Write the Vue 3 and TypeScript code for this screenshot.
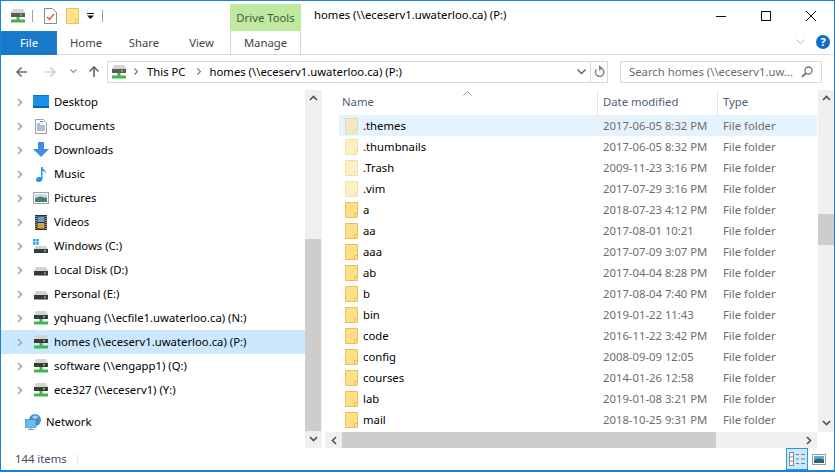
<script setup lang="ts">
type Kind = 'desktop' | 'docs' | 'down' | 'music' | 'pics' | 'videos' | 'win' | 'disk' | 'net'
interface NavItem { label: string; kind: Kind; selected?: boolean }
const navItems: NavItem[] = [
  { label: 'Desktop', kind: 'desktop' },
  { label: 'Documents', kind: 'docs' },
  { label: 'Downloads', kind: 'down' },
  { label: 'Music', kind: 'music' },
  { label: 'Pictures', kind: 'pics' },
  { label: 'Videos', kind: 'videos' },
  { label: 'Windows (C:)', kind: 'win' },
  { label: 'Local Disk (D:)', kind: 'disk' },
  { label: 'Personal (E:)', kind: 'disk' },
  { label: 'yqhuang (\\\\ecfile1.uwaterloo.ca) (N:)', kind: 'net' },
  { label: 'homes (\\\\eceserv1.uwaterloo.ca) (P:)', kind: 'net', selected: true },
  { label: 'software (\\\\engapp1) (Q:)', kind: 'net' },
  { label: 'ece327 (\\\\eceserv1) (Y:)', kind: 'net' },
]
interface FileRow { name: string; date: string; hidden?: boolean; hover?: boolean }
const files: FileRow[] = [
  { name: '.themes', date: '2017-06-05 8:32 PM', hidden: true, hover: true },
  { name: '.thumbnails', date: '2017-06-05 8:32 PM', hidden: true },
  { name: '.Trash', date: '2009-11-23 3:16 PM', hidden: true },
  { name: '.vim', date: '2017-07-29 3:16 PM', hidden: true },
  { name: 'a', date: '2018-07-23 4:12 PM' },
  { name: 'aa', date: '2017-08-01 10:21' },
  { name: 'aaa', date: '2017-07-09 3:07 PM' },
  { name: 'ab', date: '2017-04-04 8:28 PM' },
  { name: 'b', date: '2017-08-04 7:40 PM' },
  { name: 'bin', date: '2019-01-22 11:43' },
  { name: 'code', date: '2016-11-22 3:42 PM' },
  { name: 'config', date: '2008-09-09 12:05' },
  { name: 'courses', date: '2014-01-26 12:58' },
  { name: 'lab', date: '2019-01-08 3:21 PM' },
  { name: 'mail', date: '2018-10-25 9:31 PM' },
]
</script>

<template>
  <div class="window">
    <header class="titlebar">
      <div class="qat">
        <svg class="ico16" viewBox="0 0 16 16"><path d="M3 1h10l2 4v1H1V5z" fill="#d4d4d4"/><rect x="1" y="5" width="14" height="4" fill="#5a5a5a"/><rect x="10" y="6" width="2" height="1.500" fill="#5fe05f"/><rect x="6.500" y="9" width="3" height="3" fill="#3fb54a"/><rect x="1" y="11.500" width="14" height="3" fill="#3fb54a"/></svg>
        <span class="qsep"></span>
        <svg class="ico-note" viewBox="0 0 13 16"><path d="M.5.500h8l4 4v11H.5z" fill="#fff" stroke="#8a8a8a"/><path d="M3 9l2.500 2.500L10 6" fill="none" stroke="#e4572e" stroke-width="1.400"/></svg>
        <svg class="ico-newfolder" viewBox="0 0 13 16"><path d="M.5.500h12v15H.5z" fill="#ffe58f" stroke="#e6c35c"/><path d="M9.500 15.500v-4h3" fill="none" stroke="#e6c35c"/></svg>
        <svg class="ico-drop" viewBox="0 0 7 6"><rect width="7" height="1" fill="#111"/><path d="M0 2.500h7L3.500 6z" fill="#111"/></svg>
        <span class="qsep last"></span>
      </div>
      <div class="context-tab">Drive Tools</div>
      <div class="title">homes (\\eceserv1.uwaterloo.ca) (P:)</div>
      <div class="controls">
        <button class="ctl"><svg width="10" height="10" viewBox="0 0 10 10"><path d="M0 5.500h10" stroke="#111"/></svg></button>
        <button class="ctl"><svg width="10" height="10" viewBox="0 0 10 10"><rect x=".5" y=".5" width="9" height="9" fill="none" stroke="#111"/></svg></button>
        <button class="ctl"><svg width="10" height="10" viewBox="0 0 10 10"><path d="M0 0l10 10M10 0L0 10" stroke="#111"/></svg></button>
      </div>
    </header>

    <nav class="ribbon">
      <div class="tab file">File</div>
      <div class="tab home">Home</div>
      <div class="tab share">Share</div>
      <div class="tab view">View</div>
      <div class="tab manage">Manage</div>
      <div class="ribbon-end">
        <svg width="9" height="6" viewBox="0 0 9 6"><path d="M.5.500l4 4 4-4" fill="none" stroke="#b5b5b5"/></svg>
        <span class="help">?</span>
      </div>
    </nav>

    <div class="addressbar">
      <svg class="nav-arrow" viewBox="0 0 13 12"><path d="M12 6H2M6.500 1.500L2 6l4.500 4.500" fill="none" stroke="#6d6d6d" stroke-width="1.700"/></svg>
      <svg class="nav-arrow fwd" viewBox="0 0 13 12"><path d="M1 6h10M6.500 1.500L11 6l-4.500 4.500" fill="none" stroke="#cfcfcf" stroke-width="1.700"/></svg>
      <svg class="recent" viewBox="0 0 7 5"><path d="M.5.500l3 3 3-3" fill="none" stroke="#8d8d8d" stroke-width="1.100"/></svg>
      <svg class="nav-up" viewBox="0 0 12 13"><path d="M6 12V2M1.500 6.500L6 2l4.500 4.500" fill="none" stroke="#6d6d6d" stroke-width="1.700"/></svg>
      <div class="address">
        <svg class="ico16 addr-ico" viewBox="0 0 16 16"><path d="M3 1h10l2 4v1H1V5z" fill="#d4d4d4"/><rect x="1" y="5" width="14" height="4" fill="#5a5a5a"/><rect x="10" y="6" width="2" height="1.500" fill="#5fe05f"/><rect x="6.500" y="9" width="3" height="3" fill="#3fb54a"/><rect x="1" y="11.500" width="14" height="3" fill="#3fb54a"/></svg>
        <svg class="crumb-sep" viewBox="0 0 4 7"><path d="M.5.500l3 3-3 3" fill="none" stroke="#777" stroke-width="1.200"/></svg>
        <span class="crumb">This PC</span>
        <svg class="crumb-sep" viewBox="0 0 4 7"><path d="M.5.500l3 3-3 3" fill="none" stroke="#777" stroke-width="1.200"/></svg>
        <span class="crumb">homes (\\eceserv1.uwaterloo.ca) (P:)</span>
        <span class="addr-grow"></span>
        <svg class="addr-drop" viewBox="0 0 9 6"><path d="M.5.500l4 4 4-4" fill="none" stroke="#666" stroke-width="1.500"/></svg>
        <span class="addr-refresh">
          <svg width="11" height="13" viewBox="0 0 11 13"><path d="M7 3.200a4.200 4.200 0 1 1-4.500 1.200" fill="none" stroke="#808080" stroke-width="1.400"/><path d="M5 0v6l3.500-3z" fill="#808080"/></svg>
        </span>
      </div>
      <div class="search">
        <span class="search-text">Search homes (\\eceserv1.uw...</span>
        <svg width="12" height="12" viewBox="0 0 12 12"><circle cx="7.500" cy="4.500" r="3.500" fill="none" stroke="#777" stroke-width="1.300"/><path d="M5 7l-4 4" stroke="#777" stroke-width="1.800"/></svg>
      </div>
    </div>

    <main class="body">
      <aside class="nav">
        <div class="nav-list">
          <div v-for="item in navItems" :key="item.label" class="nav-row" :class="{ selected: item.selected }">
            <svg class="chev" viewBox="0 0 6 9"><path d="M1 1l3.500 3.500L1 8" fill="none" stroke="#a6a6a6" stroke-width="1.500"/></svg>
            <svg class="nav-ico" viewBox="0 0 16 16">
              <template v-if="item.kind === 'desktop'"><rect y="1" width="16" height="12" fill="#1a8fe8"/><rect y="12" width="16" height="2" fill="#0e5fa8"/><rect y="1" width="16" height=".8" fill="#0f6db5"/></template>
              <template v-else-if="item.kind === 'docs'"><path d="M2.500 1.500h8l3 3v11h-11z" fill="#fafafa" stroke="#a0a0a0"/><path d="M4 6h3M4 8h8M4 10h8M4 12h8" stroke="#5a87b5"/><path d="M7 3.500h3" stroke="#5a87b5"/></template>
              <template v-else-if="item.kind === 'down'"><path d="M5 0h6v7h5l-8 8-8-8h5z" fill="#3f8fdc"/></template>
              <template v-else-if="item.kind === 'music'"><path d="M8 1h1.500c.300 3 4 3 3.500 7-.500-2-2-3-3.500-3v8c0 2-2 3-4 3s-3-1.500-2.500-3 2.500-2.500 5-1.500z" fill="#1f9ae8"/></template>
              <template v-else-if="item.kind === 'pics'"><rect x=".5" y="2.500" width="15" height="11" fill="#fff" stroke="#a0a0a0"/><rect x="2" y="4" width="12" height="4" fill="#c5e0f0"/><path d="M2 8l5-1.500L14 8v4H2z" fill="#4d7d70"/></template>
              <template v-else-if="item.kind === 'videos'"><rect x="2" y="1" width="12" height="15" fill="#333"/><rect x="4.500" y="2.500" width="7" height="5.500" fill="#5aa0d8"/><rect x="4.500" y="9" width="7" height="5.500" fill="#d8a33a"/><path d="M3 2v13M13 2v13" stroke="#ddd" stroke-dasharray="1 1"/></template>
              <template v-else-if="item.kind === 'win'"><rect x="0" y="1" width="2.500" height="2.500" fill="#1ba1ec"/><rect x="3.200" y="1" width="2.500" height="2.500" fill="#1ba1ec"/><rect x="0" y="4.200" width="2.500" height="2.500" fill="#1ba1ec"/><rect x="3.200" y="4.200" width="2.500" height="2.500" fill="#1ba1ec"/><path d="M3 8h10l2 3v3H1v-3z" fill="#d2d2d2"/><rect x="1" y="11" width="14" height="4" fill="#3a3a3a"/><rect x="11" y="12" width="2" height="1.500" fill="#4fdc4f"/></template>
              <template v-else-if="item.kind === 'disk'"><path d="M3 5h10l2 4v2H1V9z" fill="#d2d2d2"/><rect x="1" y="9" width="14" height="4.500" fill="#3a3a3a"/><rect x="11" y="10.500" width="2" height="1.500" fill="#4fdc4f"/></template>
              <template v-else><path d="M3 1h10l2 4v1H1V5z" fill="#d4d4d4"/><rect x="1" y="5" width="14" height="4" fill="#3a3a3a"/><rect x="10" y="6" width="2" height="1.500" fill="#4fdc4f"/><rect x="6.500" y="9" width="3" height="3" fill="#3fb54a"/><rect x="1" y="11.500" width="14" height="3" fill="#3fb54a"/></template>
            </svg>
            <span class="nav-label">{{ item.label }}</span>
          </div>
          <div class="nav-row network">
            <svg class="nav-ico" viewBox="0 0 16 16"><circle cx="10" cy="6" r="6" fill="#4b8fc4"/><path d="M7 3c2-2 5-2 6 0-1 2-4 3-6 0z" fill="#a8d0ea"/><rect x=".5" y="5.500" width="10.500" height="8" fill="#66bff2" stroke="#3a7fb5" stroke-width=".6"/><path d="M3 15.500h6M6 13.500v2" stroke="#8a9aa5"/></svg>
            <span class="nav-label">Network</span>
          </div>
        </div>
        <div class="vscroll nav-scroll">
          <svg class="sb-arrow" viewBox="0 0 9 6"><path d="M1 5l3.500-3.500L8 5" fill="none" stroke="#505050" stroke-width="1.600"/></svg>
          <span class="nav-track"></span>
          <span class="nav-thumb"></span>
          <svg class="sb-arrow" viewBox="0 0 9 6"><path d="M1 1l3.500 3.500L8 1" fill="none" stroke="#505050" stroke-width="1.600"/></svg>
        </div>
        <span class="splitter"></span>
      </aside>

      <section class="list">
        <div class="list-main">
          <div class="list-inner">
            <div class="list-head">
              <div class="col name">Name</div>
              <div class="col date">Date modified</div>
              <div class="col type">Type</div>
              <svg class="sort" viewBox="0 0 9 5"><path d="M.5 4.500l4-4 4 4" fill="none" stroke="#9a9a9a"/></svg>
            </div>
            <div v-for="f in files" :key="f.name" class="row" :class="{ hover: f.hover, hiddenf: f.hidden }">
              <svg class="folder" viewBox="0 0 13 16"><path d="M.5.500h12v15H.5z" fill="#ffe08a" stroke="#e8c254"/><path d="M9.500 15.500v-4h3" fill="none" stroke="#e8c254"/></svg>
              <span class="fname">{{ f.name }}</span>
              <span class="fdate">{{ f.date }}</span>
              <span class="ftype">File folder</span>
            </div>
          </div>
          <div class="vscroll list-scroll">
            <svg class="sb-arrow" viewBox="0 0 9 6"><path d="M1 5l3.500-3.500L8 5" fill="none" stroke="#505050" stroke-width="1.600"/></svg>
            <span class="list-track-a"></span>
            <span class="list-thumb"></span>
            <span class="list-track-b"></span>
            <svg class="sb-arrow" viewBox="0 0 9 6"><path d="M1 1l3.500 3.500L8 1" fill="none" stroke="#505050" stroke-width="1.600"/></svg>
          </div>
        </div>
        <div class="hscroll">
          <svg class="sb-arrow-h" viewBox="0 0 6 9"><path d="M5 1L1.500 4.500 5 8" fill="none" stroke="#505050" stroke-width="1.600"/></svg>
          <span class="h-thumb"></span>
          <span class="h-track"></span>
          <svg class="sb-arrow-h" viewBox="0 0 6 9"><path d="M1 1l3.500 3.500L1 8" fill="none" stroke="#505050" stroke-width="1.600"/></svg>
        </div>
      </section>
    </main>

    <footer class="status">
      <span class="count">144 items</span>
      <span class="status-sep"></span>
      <span class="status-grow"></span>
      <span class="viewbtn active">
        <svg width="16" height="14" viewBox="0 0 16 14"><rect x=".5" y=".5" width="4" height="13" fill="#fff" stroke="#8a8a8a"/><path d="M1 5h3M1 9h3" stroke="#8a8a8a"/><path d="M7 2.500h3M12 2.500h4M7 7h3M12 7h4M7 11.500h3M12 11.500h4" stroke="#7a7a7a"/></svg>
      </span>
      <span class="viewbtn">
        <svg width="14" height="11" viewBox="0 0 14 11"><rect x=".5" y=".5" width="13" height="10" fill="#fff" stroke="#9a9a9a"/><rect x="2" y="2" width="10" height="3.500" fill="#55aee8"/><path d="M2 5.500l5-1 5 1V9H2z" fill="#34606a"/></svg>
      </span>
    </footer>
  </div>
</template>

<style>
html, body { margin: 0; padding: 0; background: #fff; }
</style>

<style scoped>
.window {
  width: 835px;
  height: 472px;
  box-sizing: border-box;
  border: 1px solid #1883d7;
  border-bottom-width: 2px;
  background: #fff;
  font-family: "Noto Sans", "Open Sans", sans-serif;
  font-size: 11.3px;
  color: #000;
  display: flex;
  flex-direction: column;
  overflow: hidden;
}
svg { display: block; flex: none; }

.titlebar { height: 30px; display: flex; flex: none; }
.qat { width: 229px; display: flex; align-items: center; padding: 0 0 0 9px; box-sizing: border-box; }
.ico16 { width: 16px; height: 16px; }
.qsep { width: 1px; height: 12px; background: #a0a0a0; margin: 0 11px 0 6px; }
.qsep.last { margin: 0 0 0 8px; }
.ico-note { width: 13px; height: 16px; margin-right: 9px; }
.ico-newfolder { width: 13px; height: 16px; margin-right: 8px; }
.ico-drop { width: 7px; height: 6px; }
.context-tab {
  width: 71px; height: 27px; margin-top: 3px; background: #bfe99e; color: #3f5a3f;
  display: flex; align-items: center; justify-content: center; box-sizing: border-box;
}
.title { margin-left: 13px; line-height: 28px; color: #000; flex: 1; white-space: nowrap; }
.controls { display: flex; padding-right: 1px; }
.ctl { width: 45px; height: 29px; border: 0; background: none; padding: 0; display: flex; align-items: center; justify-content: center; }

.ribbon { height: 24px; display: flex; flex: none; border-bottom: 1px solid #dadbdc; box-sizing: border-box; }
.tab { height: 23px; line-height: 24px; color: #444; text-align: center; }
.tab.file { width: 56px; height: 24px; background: #1979ca; color: #fff; }
.tab.home { width: 58px; }
.tab.share { width: 58px; }
.tab.view { width: 57px; }
.tab.manage { width: 71px; border-left: 1px solid #d5d5d5; border-right: 1px solid #d5d5d5; box-sizing: border-box; }
.ribbon-end { margin-left: auto; display: flex; align-items: center; gap: 11px; padding-right: 4px; padding-bottom: 1px; }
.help {
  width: 14px; height: 14px; border-radius: 50%; background: #0f6fc6; color: #fff;
  font-size: 11px; font-weight: 700; line-height: 14px; text-align: center;
}

.addressbar { height: 35px; flex: none; display: flex; align-items: center; padding: 0 0 2px 14px; box-sizing: border-box; }
.nav-arrow { width: 13px; height: 12px; }
.nav-arrow.fwd { margin-left: 16px; }
.recent { width: 7px; height: 5px; margin-left: 13px; }
.nav-up { width: 12px; height: 13px; margin-left: 11px; margin-right: 7px; }
.address {
  width: 501px; height: 22px; box-sizing: border-box; border: 1px solid #d9d9d9;
  display: flex; align-items: center; padding-left: 2px; color: #000;
}
.addr-ico { margin-left: 1px; }
.crumb-sep { width: 4px; height: 7px; margin: 0 9px 0 11px; }
.addr-ico + .crumb-sep { margin-left: 7px; margin-right: 9px; }
.addr-grow { flex: 1; }
.addr-drop { width: 9px; height: 6px; margin-right: 4px; }
.addr-refresh { width: 17px; height: 20px; border-left: 1px solid #d9d9d9; display: flex; align-items: center; justify-content: center; box-sizing: border-box; }
.search {
  width: 202px; height: 22px; margin-left: 12px; box-sizing: border-box; border: 1px solid #d9d9d9;
  display: flex; align-items: center; justify-content: space-between; padding: 0 8px; color: #6d6d6d;
}
.search-text { white-space: nowrap; }

.body { flex: 1; min-height: 0; display: flex; }
.nav { width: 324px; display: flex; flex: none; }
.nav-list { width: 304px; flex: none; overflow: hidden; }
.nav-row { height: 24px; display: flex; align-items: center; padding-left: 16px; box-sizing: border-box; white-space: nowrap; }
.nav-row.selected { background: #cce8ff; }
.nav-row.network { margin-top: 8px; padding-left: 24px; }
.chev { width: 6px; height: 9px; margin-right: 10px; }
.nav-ico { width: 16px; height: 16px; margin-right: 5px; }
.nav-label { color: #000; padding-bottom: 2px; }
.splitter { width: 1px; background: #f3f3f3; align-self: stretch; }

.vscroll { width: 16px; background: #f0f0f0; display: flex; flex-direction: column; align-items: center; flex: none; }
.sb-arrow { width: 9px; height: 6px; margin: 5px 0 6px; }
.nav-track { height: 132px; }
.nav-thumb { flex: 1; align-self: stretch; background: #cdcdcd; }

.list { flex: 1; min-width: 0; display: flex; flex-direction: column; }
.list-main { flex: 1; min-height: 0; display: flex; }
.list-inner { flex: 1; min-width: 0; padding-left: 14px; padding-right: 1px; box-sizing: border-box; overflow: hidden; }
.list-head { height: 25px; position: relative; display: flex; color: #4c607a; }
.col { height: 25px; line-height: 23px; box-sizing: border-box; }
.col.name { width: 258px; padding-left: 3px; }
.col.date { width: 120px; padding-left: 5px; border-left: 1px solid #e5e5e5; }
.col.type { flex: 1; padding-left: 5px; border-left: 1px solid #e5e5e5; }
.sort { position: absolute; left: 124px; top: 1px; width: 9px; height: 5px; }
.row { height: 21px; display: flex; align-items: center; color: #000; }
.row.hover { background: #e5f3ff; }
.folder { width: 13px; height: 16px; margin-left: 6px; margin-right: 5px; }
.hiddenf .folder { opacity: .5; }
.fname, .fdate, .ftype { white-space: nowrap; }
.fname { width: 240px; }
.fdate { width: 120px; color: #6d6d6d; }
.ftype { color: #6d6d6d; }

.list-track-a { height: 107px; }
.list-thumb { height: 31px; align-self: stretch; background: #cdcdcd; }
.list-track-b { flex: 1; }

.hscroll { height: 16px; flex: none; margin-right: 17px; background: #f0f0f0; display: flex; align-items: center; }
.sb-arrow-h { width: 6px; height: 9px; margin: 0 5px 0 6px; }
.h-thumb { width: 374px; height: 16px; background: #cdcdcd; }
.h-track { flex: 1; }

.status { height: 22px; flex: none; display: flex; align-items: center; padding-left: 14px; padding-right: 4px; color: #3f4a60; }
.count { padding-bottom: 2px; }
.status-sep { width: 1px; height: 11px; background: #e8e8e8; margin-left: 10px; }
.status-grow { flex: 1; }
.viewbtn { width: 22px; height: 22px; box-sizing: border-box; display: flex; align-items: center; justify-content: center; }
.viewbtn.active { background: #cce8ff; border: 1px solid #1b9ce8; }
</style>
